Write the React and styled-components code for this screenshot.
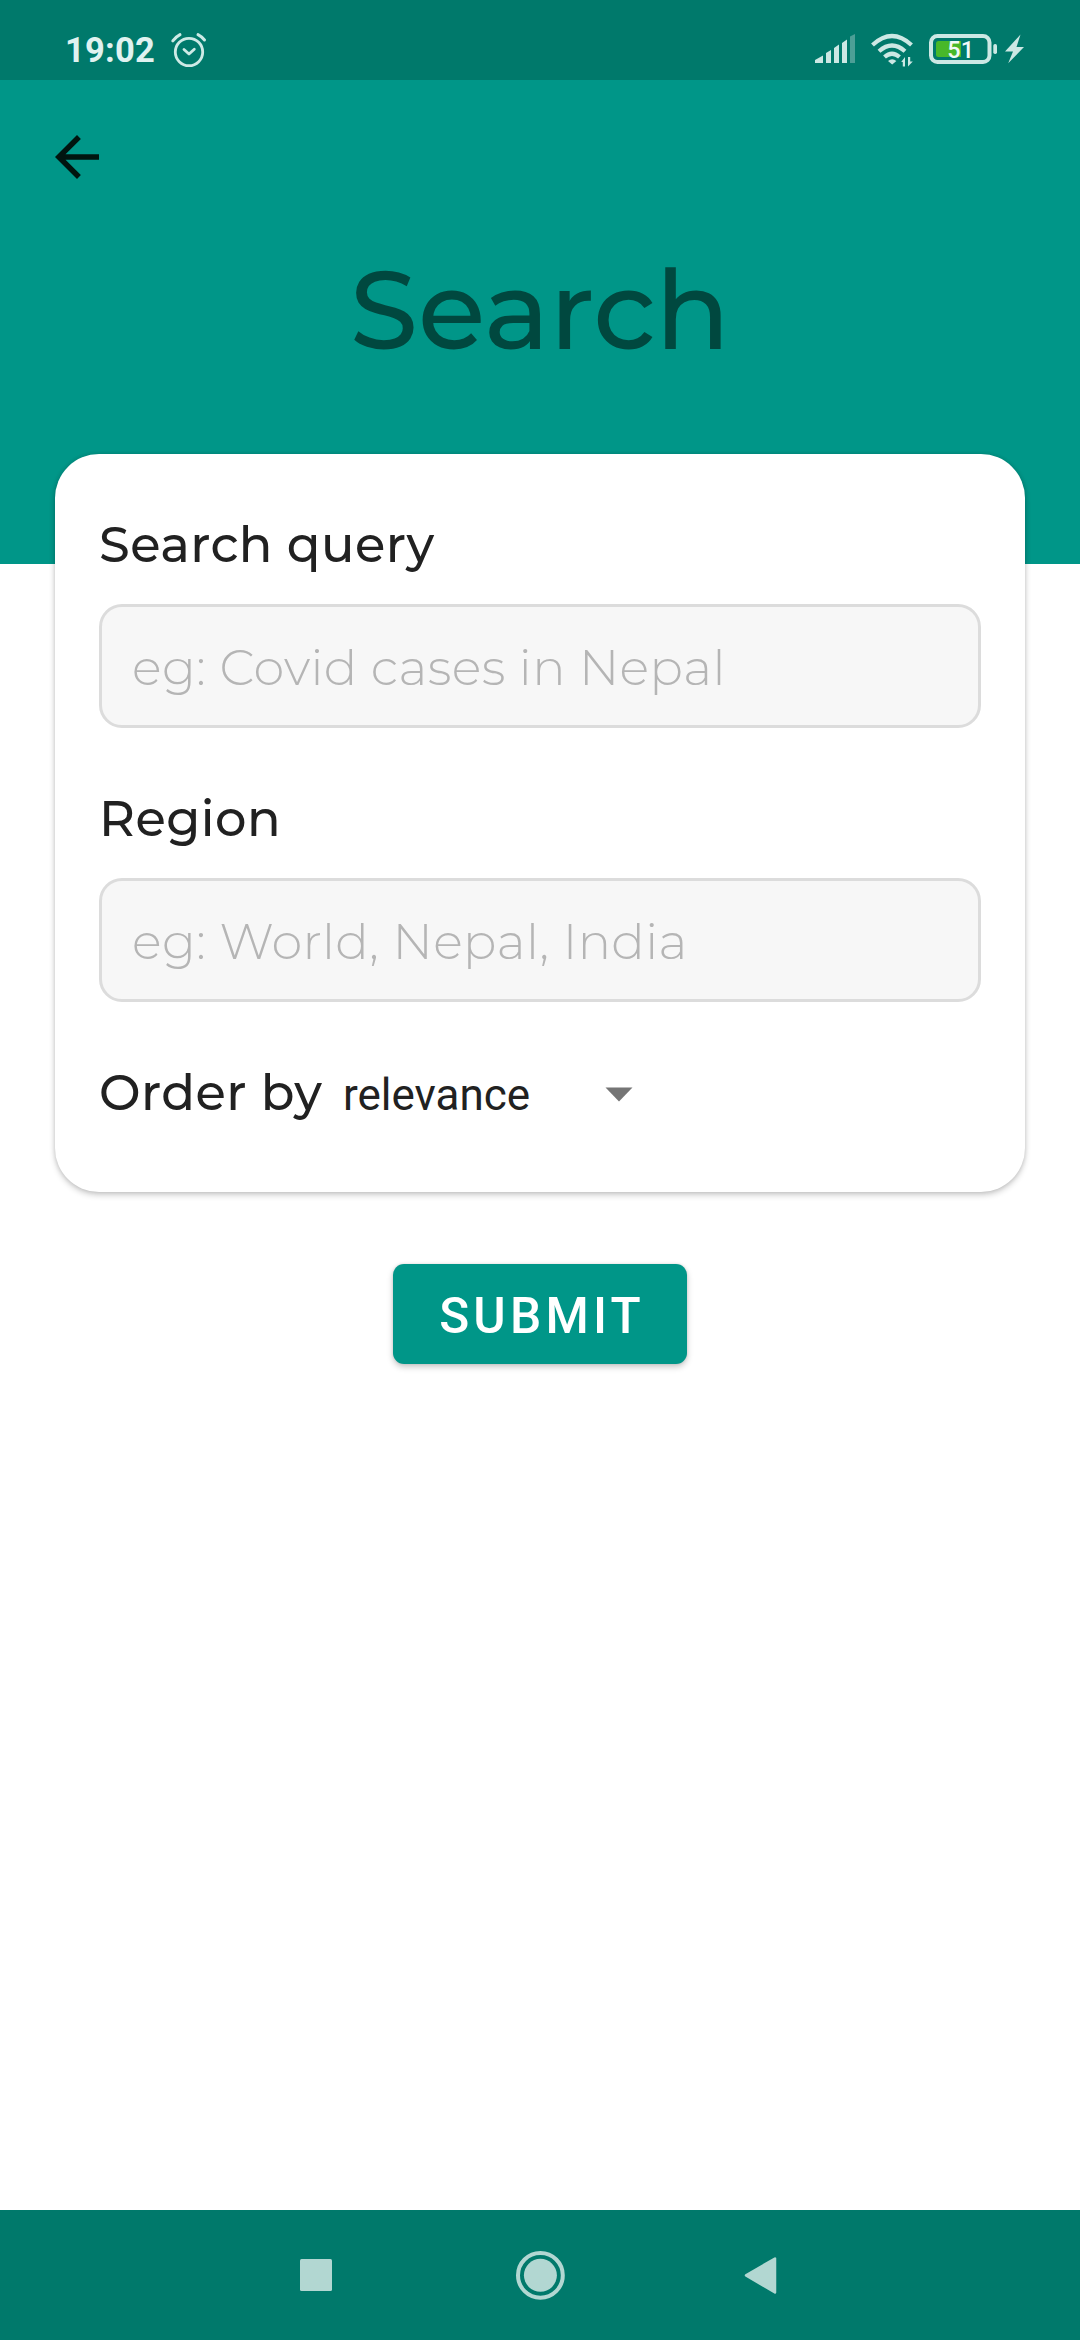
import React from "react";
import styled, { createGlobalStyle } from "styled-components";

const GlobalStyle = createGlobalStyle`
  * { box-sizing: border-box; }
  body { margin: 0; background: #ffffff; }
`;

const Screen = styled.div`
  width: 1080px;
  height: 2340px;
  display: flex;
  flex-direction: column;
  background: #ffffff;
  font-family: Roboto, sans-serif;
`;

const StatusBar = styled.div`
  height: 80px;
  flex: none;
  display: flex;
  justify-content: space-between;
  padding: 0 54px 0 65px;
  background: #00796b;
`;

const StatusGroup = styled.div`
  display: flex;
  align-items: flex-start;
`;

const Clock = styled.span`
  width: 105px;
  padding-top: 30px;
  font-size: 34.5px;
  line-height: 40px;
  font-weight: 700;
  letter-spacing: 0.2px;
  color: #e0f2f0;
`;

const Header = styled.header`
  height: 484px;
  flex: none;
  display: flex;
  flex-direction: column;
  background: #009688;
`;

const BackButton = styled.button`
  width: 66px;
  height: 66px;
  margin: 44px 0 0 44px;
  padding: 0;
  border: 0;
  background: none;
  line-height: 0;
`;

const Title = styled.h1`
  margin: 55px 0 0;
  text-align: center;
  font-family: Montserrat, Lato, sans-serif;
  font-size: 110px;
  line-height: 130px;
  font-weight: 500;
  color: #00483f;
`;

const Card = styled.section`
  height: 738px;
  flex: none;
  margin: -110px 55px 0;
  padding: 59px 44px 0;
  border-radius: 44px;
  background: #ffffff;
  box-shadow: 0 3px 6px rgba(0, 0, 0, 0.2), 0 0 4px rgba(0, 0, 0, 0.12);
`;

const Label = styled.div`
  height: 60px;
  font-family: Montserrat, Lato, sans-serif;
  font-size: 49.5px;
  line-height: 63px;
  font-weight: 500;
  letter-spacing: 0.46px;
  color: #212121;
`;

const Field = styled.div`
  height: 124px;
  margin: 31px 0 59px;
  padding: 0 30px;
  border: 3px solid #dcdcdc;
  border-radius: 23px;
  background: #f7f7f7;
  font-family: Montserrat, Lato, sans-serif;
  font-size: 49.5px;
  line-height: 120px;
  font-weight: 300;
  letter-spacing: 0.38px;
  color: #b5b5b5;
`;

const OrderRow = styled.div`
  display: flex;
  height: 60px;
`;

const OrderLabel = styled(Label)`
  width: 244px;
`;

const Select = styled.div`
  display: flex;
  width: 290px;
  justify-content: space-between;
  font-size: 44px;
  line-height: 68px;
  color: #212121;
`;

const Caret = styled.svg`
  width: 28px;
  height: 15px;
  margin-top: 26px;
`;

const Submit = styled.button`
  width: 294px;
  height: 100px;
  flex: none;
  align-self: center;
  margin: 72px 0 0;
  padding: 4px 0 0 4px;
  border: 0;
  border-radius: 11px;
  background: #009688;
  box-shadow: 0 3px 6px rgba(0, 0, 0, 0.22), 0 0 3px rgba(0, 0, 0, 0.1);
  color: #ffffff;
  font-family: Roboto, sans-serif;
  font-size: 49.5px;
  font-weight: 500;
  letter-spacing: 4.2px;
`;

const NavBar = styled.nav`
  height: 130px;
  flex: none;
  margin-top: auto;
  background: #00796b;
  line-height: 0;
`;

function AlarmIcon() {
  return (
    <svg width="38" height="80" viewBox="170 0 38 80" fill="none" stroke="#cdeae6" strokeLinecap="round">
      <circle cx="189" cy="52" r="13.7" strokeWidth="2.8" />
      <path d="M184 49.5l5 4.5 5.3-4.8" strokeWidth="2.8" strokeLinejoin="round" />
      <path d="M172.8 40.8q3-4 7.2-6.2M204.500 40q-2.800-3.500-6.500-5.400" strokeWidth="3" />
    </svg>
  );
}

function SystemIcons() {
  return (
    <svg width="212" height="80" viewBox="814 0 212 80">
      <path d="M815 63v-3l8-4.500v7.500zM826 63V53l5-3v13zM834 63V48l5-3.500V63zM842 63V43l5-3.500V63z" fill="#cce8e4" />
      <path d="M850 63V36.500l5-2.500v29z" fill="#4c9f96" />
      <g fill="none" stroke="#cce8e4" strokeWidth="4.200">
        <path d="M872.500 45q19.500-18 39 0" />
        <path d="M879 51.300q13-11.500 26 0" />
        <path d="M884.500 57q7.500-6.500 15 0" />
      </g>
      <path d="M888 61q4.200-3.500 8.400 0l-4.200 3.500z" fill="#cce8e4" />
      <path d="M905 57v9.500h-2.200v-4.500h-1.600zM908 66.500V57h2.200v4.500h2.600z" fill="#cce8e4" />
      <rect x="931" y="36" width="58.500" height="26" rx="6.500" fill="none" stroke="#cce8e4" strokeWidth="4" />
      <path d="M938.500 41H961v16h-22.500q-2.500 0-2.500-2.500v-11q0-2.500 2.500-2.500z" fill="#48b829" />
      <rect x="993.300" y="44" width="3.700" height="10" rx="1.700" fill="#cce8e4" />
      <text x="947.300" y="58" fontFamily="Roboto, sans-serif" fontSize="23.500" fontWeight="500" fill="#f0faf8">51</text>
      <path d="M1020.500 34.500L1005 51.500h8l-4.800 11.800L1024 47h-7.500z" fill="#cce8e4" />
    </svg>
  );
}

function BackIcon() {
  return (
    <svg width="66" height="66" viewBox="0 0 24 24" fill="#00150f">
      <path d="M20 11H7.830l5.590-5.590L12 4l-8 8 8 8 1.410-1.410L7.830 13H20v-2z" />
    </svg>
  );
}

function NavIcons() {
  return (
    <svg width="1080" height="130" viewBox="0 2210 1080 130" fill="#b2d7d2">
      <rect x="300" y="2259" width="32" height="32" rx="1.500" />
      <circle cx="540.400" cy="2275.300" r="22.400" fill="none" stroke="#b2d7d2" strokeWidth="4" />
      <circle cx="540.400" cy="2275.300" r="16.500" />
      <path d="M746 2275.300L775 2258.500V2292.500z" stroke="#b2d7d2" strokeWidth="2.500" strokeLinejoin="round" />
    </svg>
  );
}

export default function App() {
  return (
    <Screen>
      <GlobalStyle />
      <StatusBar>
        <StatusGroup>
          <Clock>19:02</Clock>
          <AlarmIcon />
        </StatusGroup>
        <StatusGroup>
          <SystemIcons />
        </StatusGroup>
      </StatusBar>
      <Header>
        <BackButton aria-label="Back">
          <BackIcon />
        </BackButton>
        <Title>Search</Title>
      </Header>
      <Card>
        <Label>Search query</Label>
        <Field>eg: Covid cases in Nepal</Field>
        <Label>Region</Label>
        <Field>eg: World, Nepal, India</Field>
        <OrderRow>
          <OrderLabel>Order by</OrderLabel>
          <Select>
            relevance
            <Caret viewBox="0 0 28 15">
              <path d="M0.500 0.500h27L14 14.500z" fill="#757575" />
            </Caret>
          </Select>
        </OrderRow>
      </Card>
      <Submit>SUBMIT</Submit>
      <NavBar>
        <NavIcons />
      </NavBar>
    </Screen>
  );
}
